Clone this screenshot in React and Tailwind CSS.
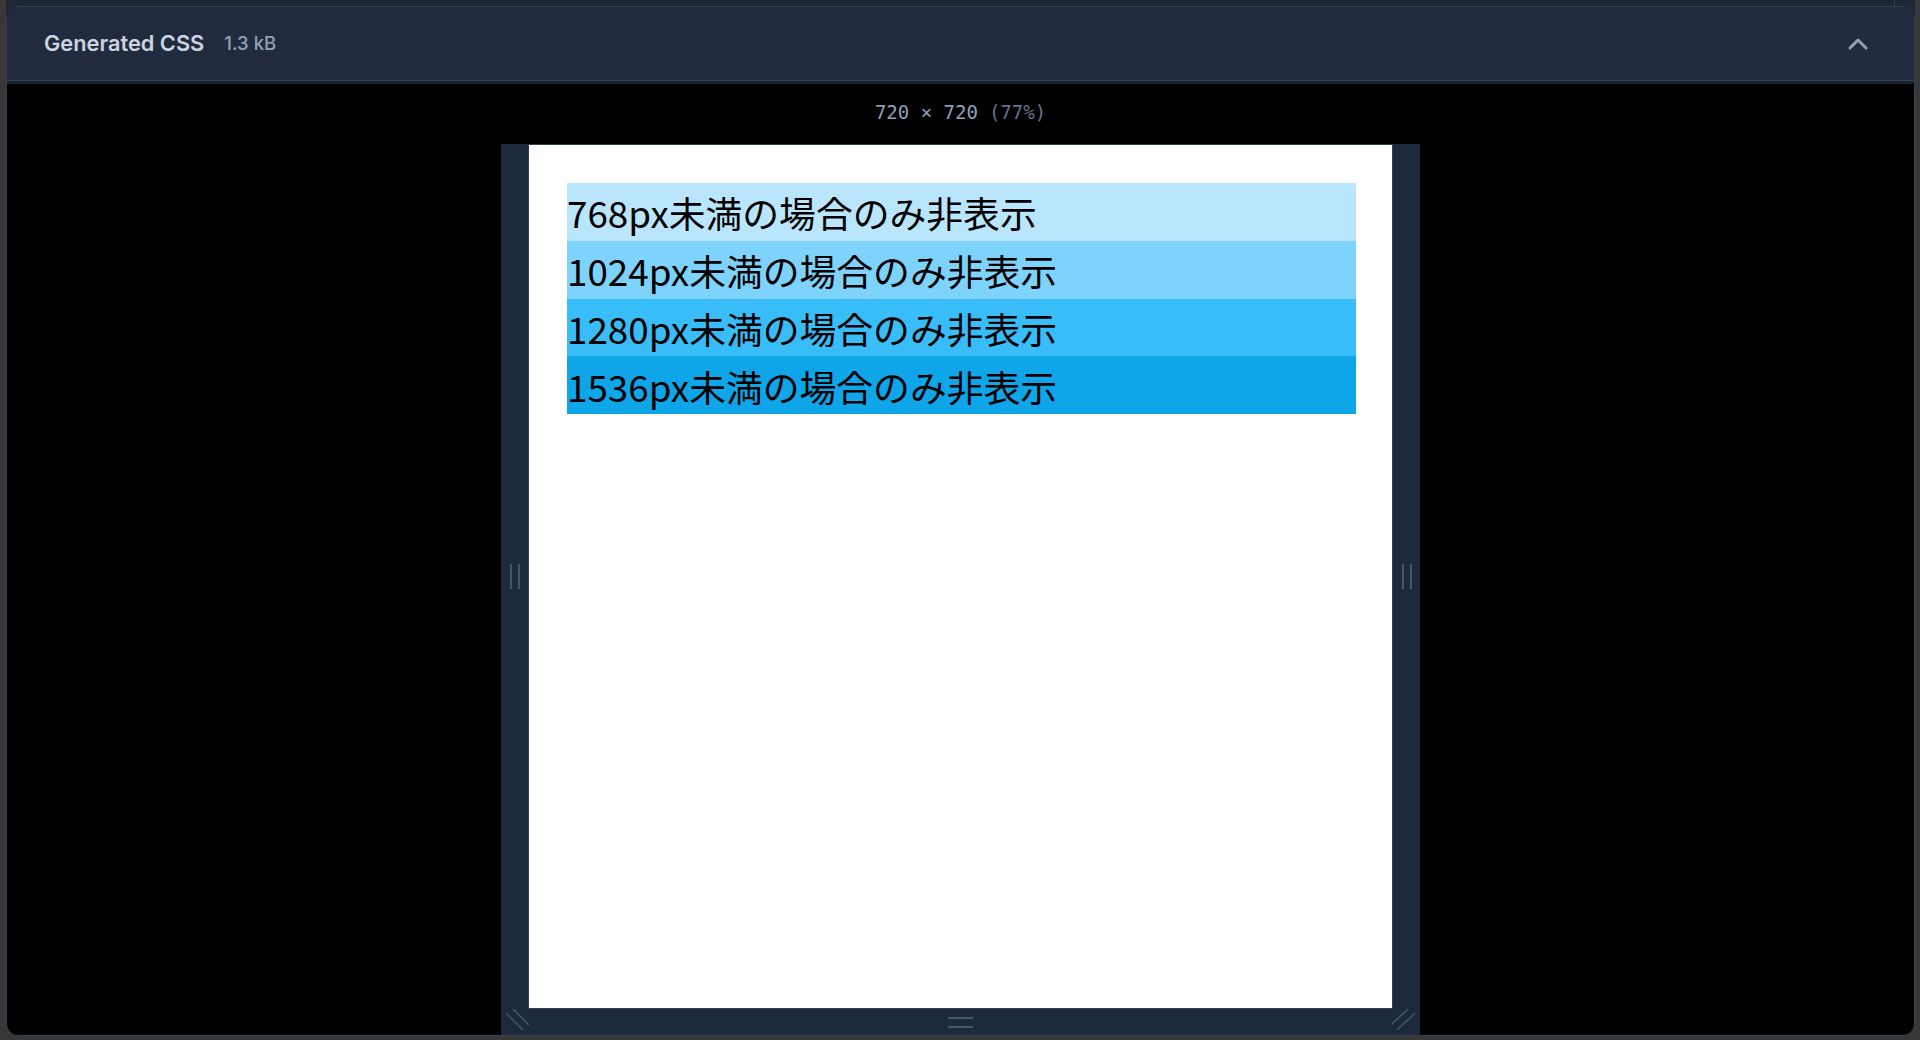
import { ChevronUp } from "lucide-react"

const rows = [
  { label: "768px未満の場合のみ非表示", bg: "bg-[#bae6fd]" },
  { label: "1024px未満の場合のみ非表示", bg: "bg-[#7dd3fc]" },
  { label: "1280px未満の場合のみ非表示", bg: "bg-[#38bdf8]" },
  { label: "1536px未満の場合のみ非表示", bg: "bg-[#0ea5e9]" },
]

function Grip({ vertical }) {
  // two short lines used as resize grips on the frame
  return vertical ? (
    <div className="flex gap-[6px]">
      <div className="w-[2px] h-[25px] bg-[#475569]" />
      <div className="w-[2px] h-[25px] bg-[#475569]" />
    </div>
  ) : (
    <div className="flex flex-col gap-[7px]">
      <div className="w-[25px] h-[2px] bg-[#475569]" />
      <div className="w-[25px] h-[2px] bg-[#475569]" />
    </div>
  )
}

function PreviewFrame() {
  return (
    <div className="w-[919px] flex-1 flex flex-col bg-slate-800">
      <div className="flex-1 flex">
        <div className="w-[27px] flex items-center justify-center">
          <Grip vertical />
        </div>
        <div className="w-[865px] bg-white border border-[#334155] pt-[38px] pl-[38px] pr-[36px]">
          <div className="flex flex-col">
            {rows.map((r) => (
              <div
                key={r.label}
                className={`${r.bg} h-[57.75px] flex items-center pt-[2px] text-black text-[36.8px] leading-none font-['Noto_Sans_CJK_JP',sans-serif]`}
              >
                {r.label}
              </div>
            ))}
          </div>
        </div>
        <div className="w-[27px] flex items-center justify-center">
          <Grip vertical />
        </div>
      </div>
      <div className="h-[26px] flex items-start">
        <svg width="28" height="26" viewBox="0 0 28 26" className="shrink-0">
          <path d="M11 -1 L28 16 M5 4 L22 21" stroke="#475569" strokeWidth="1.5" />
        </svg>
        <div className="flex-1 flex justify-center pt-[8px]">
          <Grip />
        </div>
        <svg width="28" height="26" viewBox="0 0 28 26" className="shrink-0">
          <path d="M-1 16 L17 -1 M5 21 L23 4" stroke="#475569" strokeWidth="1.5" />
        </svg>
      </div>
    </div>
  )
}

export default function App() {
  return (
    <div className="w-[1920px] h-[1040px] overflow-hidden bg-[#383838] pl-[6px] pr-[5px] pb-[4px] flex font-['Inter',sans-serif]">
      <div className="flex-1 flex flex-col bg-[linear-gradient(#1e2636_0_50%,#383838_50%)]">
        <div className="h-[6px] flex justify-end pr-[20px]">
          <div className="w-px bg-[#334155]" />
        </div>
        <div className="flex-1 flex flex-col rounded-xl border border-[#334155] bg-black overflow-hidden">
          <div className="h-[74px] shrink-0 bg-[#222b3d] border-b border-[#334155] flex items-center pl-[37px] pr-[40px]">
            <span className="text-[21.8px] font-semibold text-slate-300">Generated CSS</span>
            <span className="ml-[20px] text-[18.5px] font-medium text-slate-400">1.3 kB</span>
            <ChevronUp className="ml-auto text-slate-400" size={32} strokeWidth={2.25} />
          </div>
          <div className="h-[3px] bg-[#1a2232]" />
          <div className="h-[60px] pb-[4px] flex items-center justify-center text-[19px] font-['DejaVu_Sans_Mono',monospace] text-slate-400">
            <span>720 × 720</span>
            <span className="ml-[11px] text-slate-500">(77%)</span>
          </div>
          <div className="flex-1 flex flex-col items-center">
            <PreviewFrame />
          </div>
        </div>
      </div>
    </div>
  )
}
